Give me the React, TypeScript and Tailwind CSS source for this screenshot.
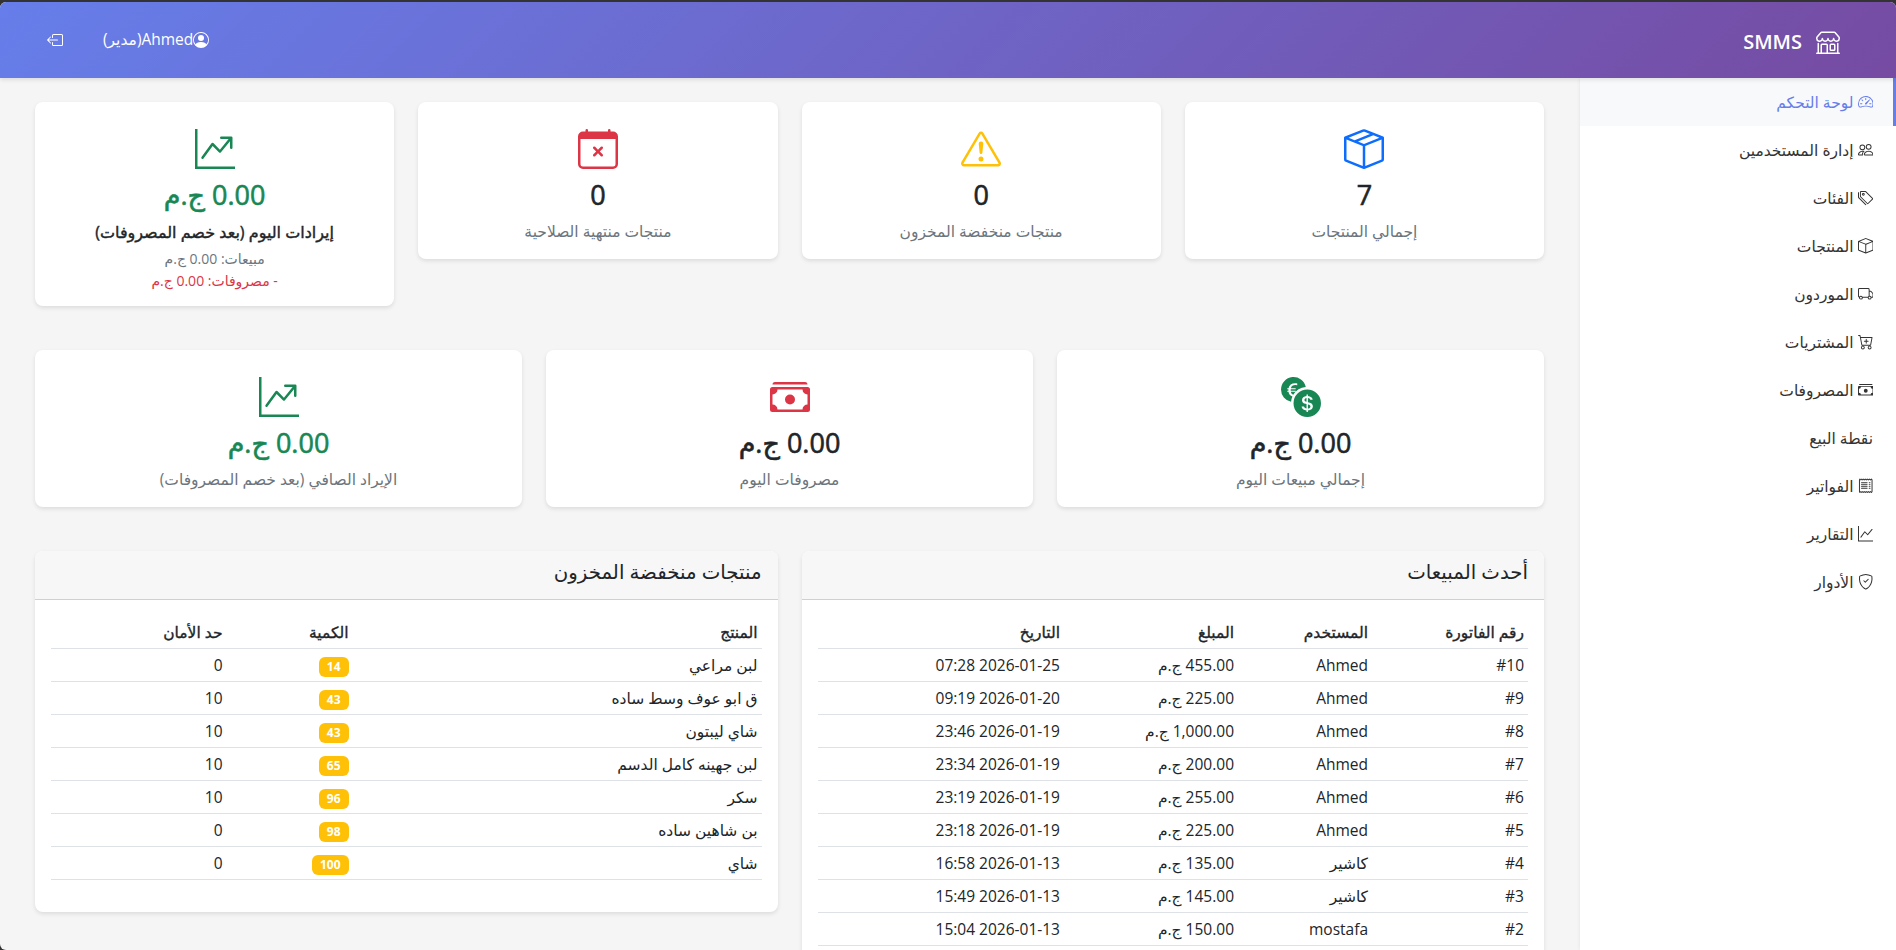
// App.tsx — لوحة تحكم SMMS
import type { ReactNode } from 'react';
import {
  BsBox, BsBoxArrowLeft, BsBoxSeam, BsCalendarX, BsCartPlus, BsCashStack,
  BsCurrencyExchange, BsExclamationTriangle, BsGraphUp, BsGraphUpArrow, BsReceipt,
  BsPeople, BsPersonCircle, BsShieldCheck, BsShop, BsSpeedometer2, BsTags, BsTruck,
} from 'react-icons/bs';

const navItems: { label: string; icon?: ReactNode; active?: boolean }[] = [
  { label: 'لوحة التحكم', icon: <BsSpeedometer2 />, active: true },
  { label: 'إدارة المستخدمين', icon: <BsPeople /> },
  { label: 'الفئات', icon: <BsTags /> },
  { label: 'المنتجات', icon: <BsBox /> },
  { label: 'الموردون', icon: <BsTruck /> },
  { label: 'المشتريات', icon: <BsCartPlus /> },
  { label: 'المصروفات', icon: <BsCashStack /> },
  { label: 'نقطة البيع' },
  { label: 'الفواتير', icon: <BsReceipt /> },
  { label: 'التقارير', icon: <BsGraphUp /> },
  { label: 'الأدوار', icon: <BsShieldCheck /> },
];

const sales = [
  ['#10', 'Ahmed', '455.00 ج.م', '2026-01-25 07:28'],
  ['#9', 'Ahmed', '225.00 ج.م', '2026-01-20 09:19'],
  ['#8', 'Ahmed', '1,000.00 ج.م', '2026-01-19 23:46'],
  ['#7', 'Ahmed', '200.00 ج.م', '2026-01-19 23:34'],
  ['#6', 'Ahmed', '255.00 ج.م', '2026-01-19 23:19'],
  ['#5', 'Ahmed', '225.00 ج.م', '2026-01-19 23:18'],
  ['#4', 'كاشير', '135.00 ج.م', '2026-01-13 16:58'],
  ['#3', 'كاشير', '145.00 ج.م', '2026-01-13 15:49'],
  ['#2', 'mostafa', '150.00 ج.م', '2026-01-13 15:04'],
];

const lowStock: [string, number, number][] = [
  ['لبن مراعي', 14, 0],
  ['ق ابو عوف وسط ساده', 43, 10],
  ['شاي ليبتون', 43, 10],
  ['لبن جهينه كامل الدسم', 65, 10],
  ['سكر', 96, 10],
  ['بن شاهين ساده', 98, 0],
  ['شاي', 100, 0],
];

function StatCard({ icon, value, label, valueClass = 'text-[#212529]' }: { icon: ReactNode; value: string; label: string; valueClass?: string }) {
  return (
    <div className="flex-1 min-w-0 bg-white rounded-lg shadow-[0_2px_4px_rgba(0,0,0,0.1)] flex flex-col items-center pt-[27px] pb-4">
      <div className="text-[40px] leading-none h-10">{icon}</div>
      <div className={`text-[27px] leading-[34px] font-medium [-webkit-text-stroke:0.6px] mt-[9px] ${valueClass}`}>{value}</div>
      <div className="leading-6 text-[#6c757d] mt-[7px]">{label}</div>
    </div>
  );
}

function TableCard({ title, children }: { title: string; children: ReactNode }) {
  return (
    <div className="flex-1 min-w-0 bg-white rounded-lg shadow-[0_2px_4px_rgba(0,0,0,0.1)] overflow-hidden self-start">
      <div className="h-[49px] px-4 pb-[6px] flex items-center bg-[#f7f7f7] border-b border-[#d0d0d0]">
        <h5 className="text-[19.75px] font-medium text-[#212529]">{title}</h5>
      </div>
      <div className="px-4 pb-4 pt-[15px]">{children}</div>
    </div>
  );
}

const th = 'h-[33px] px-1 pt-[2px] text-right font-normal [-webkit-text-stroke:0.35px] border-b border-[#dee2e6]';
const td = 'h-[33px] px-1 pt-[2px] text-right border-b border-[#dee2e6]';

export default function App() {
  return (
    <div dir="rtl" className="h-[950px] overflow-hidden bg-[#333] pt-[2px] text-[#212529] text-[15.5px] font-['Open_Sans','DejaVu_Sans',sans-serif]">
      <div className="h-[948px] overflow-hidden rounded-t-[6px] rounded-bl-[6px] bg-[#f5f5f5] flex flex-col">
        <header className="h-[76px] shrink-0 relative z-10 flex items-center justify-between pr-[56px] pl-[47px] bg-[linear-gradient(135deg,#667eea,#764ba2)] text-white shadow-[0_2px_4px_rgba(0,0,0,0.1)]">
          <div className="flex items-center gap-[14px] mt-1">
            <BsShop className="text-2xl" />
            <span className="text-xl font-semibold">SMMS</span>
          </div>
          <div className="flex items-center gap-[40px]">
            <div className="flex items-center">
              <BsPersonCircle className="text-base" />
              <span>Ahmed(مدير)</span>
            </div>
            <BsBoxArrowLeft className="text-base" />
          </div>
        </header>
        <div className="flex flex-1 min-h-0">
          <aside className="w-[316px] shrink-0 bg-white shadow-[0_0_4px_rgba(0,0,0,0.08)]">
            {navItems.map(item => (
              <div
                key={item.label}
                className={`h-12 flex items-center gap-1 pr-5 border-r-[3px] ${
                  item.active ? 'bg-[#f8f9fa] text-[#667eea] border-[#667eea]' : 'border-transparent text-[#333]'
                }`}
              >
                {item.icon}
                <span className="pt-[2px]">{item.label}</span>
              </div>
            ))}
          </aside>
          <main className="flex-1 min-w-0 pr-[36px] pl-[35px] pt-6 flex flex-col gap-[44px]">
            <div className="flex gap-6 items-start">
              <div className="flex-1 min-w-0"><StatCard icon={<BsBoxSeam className="text-[#0d6efd]" />} value="7" label="إجمالي المنتجات" /></div>
              <div className="flex-1 min-w-0"><StatCard icon={<BsExclamationTriangle className="text-[#ffc107]" />} value="0" label="منتجات منخفضة المخزون" /></div>
              <div className="flex-1 min-w-0"><StatCard icon={<BsCalendarX className="text-[#dc3545]" />} value="0" label="منتجات منتهية الصلاحية" /></div>
              <div className="flex-1 min-w-0 bg-white rounded-lg shadow-[0_2px_4px_rgba(0,0,0,0.1)] flex flex-col items-center pt-[27px] h-[204px]">
                <BsGraphUpArrow className="text-[40px] text-[#198754]" />
                <div className="text-[27px] leading-[34px] font-medium [-webkit-text-stroke:0.6px] mt-[9px] text-[#198754]">0.00 ج.م</div>
                <div className="text-base [-webkit-text-stroke:0.4px] leading-6 mt-[8px]">إيرادات اليوم (بعد خصم المصروفات)</div>
                <div className="text-sm leading-[22px] text-[#6c757d] mt-[4px]">مبيعات: 0.00 ج.م</div>
                <div className="text-sm leading-[22px] text-[#dc3545]">- مصروفات: 0.00 ج.م</div>
              </div>
            </div>
            <div className="flex gap-6 items-start">
              <StatCard icon={<BsCurrencyExchange className="text-[#198754]" />} value="0.00 ج.م" label="إجمالي مبيعات اليوم" />
              <StatCard icon={<BsCashStack className="text-[#dc3545]" />} value="0.00 ج.م" label="مصروفات اليوم" />
              <StatCard icon={<BsGraphUpArrow className="text-[#198754]" />} value="0.00 ج.م" valueClass="text-[#198754]" label="الإيراد الصافي (بعد خصم المصروفات)" />
            </div>
            <div className="flex gap-6 items-start">
              <TableCard title="أحدث المبيعات">
                <table className="w-full table-fixed border-collapse">
                  <thead>
                    <tr>
                      <th className={`${th} w-[156px]`}>رقم الفاتورة</th>
                      <th className={`${th} w-[134px]`}>المستخدم</th>
                      <th className={`${th} w-[174px]`}>المبلغ</th>
                      <th className={th}>التاريخ</th>
                    </tr>
                  </thead>
                  <tbody>
                    {sales.map(row => (
                      <tr key={row[0]}>
                        {row.map((cell, i) => <td key={i} className={td}>{cell}</td>)}
                      </tr>
                    ))}
                  </tbody>
                </table>
              </TableCard>
              <TableCard title="منتجات منخفضة المخزون">
                <table className="w-full table-fixed border-collapse">
                  <thead>
                    <tr>
                      <th className={`${th} w-[409px]`}>المنتج</th>
                      <th className={`${th} w-[126px]`}>الكمية</th>
                      <th className={th}>حد الأمان</th>
                    </tr>
                  </thead>
                  <tbody>
                    {lowStock.map(([name, qty, min]) => (
                      <tr key={name}>
                        <td className={td}>{name}</td>
                        <td className={td}>
                          <span className="inline-flex items-center h-5 px-2 rounded-md bg-[#ffc107] text-white text-xs font-bold">{qty}</span>
                        </td>
                        <td className={td}>{min}</td>
                      </tr>
                    ))}
                  </tbody>
                </table>
                <div className="h-4" />
              </TableCard>
            </div>
          </main>
        </div>
      </div>
    </div>
  );
}
